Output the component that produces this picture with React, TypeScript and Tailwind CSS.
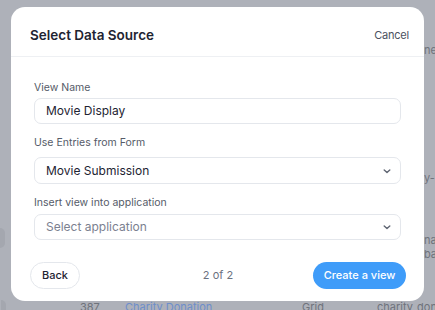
import type { FC } from "react";

const Chevron: FC = () => (
  <svg width="10" height="10" viewBox="0 0 10 10" fill="none" className="text-[#5f6572]">
    <path d="M2.2 3.9 5 6.5 7.8 3.9" stroke="currentColor" strokeWidth="1.4" strokeLinecap="round" strokeLinejoin="round" />
  </svg>
);

const App: FC = () => {
  return (
    <div className="relative h-[310px] w-[435px] overflow-hidden bg-[#aeb1b9] font-['Inter',sans-serif]">
      {/* page behind the dialog */}
      <div className="flex h-full flex-col text-[11px] text-[#6f737c]">
        <div className="flex flex-1">
          <div className="w-[6px] pt-[228px]">
            <div className="h-[20px] w-[5px] rounded-r-md bg-[#a4a7af]" />
          </div>
          <div className="flex-1" />
          <div className="w-[11px] overflow-hidden whitespace-nowrap leading-[14px]">
            <div className="mt-[43px]">ned</div>
            <div className="mt-[114px]">y-</div>
            <div className="mt-[48px]">na</div>
            <div>bar</div>
          </div>
        </div>
        <div className="grid h-[10px] grid-cols-[80px_45px_177px_75px_1fr] whitespace-nowrap leading-[14px]">
          <div className="pl-[1px]">
            <div className="h-[14px] w-[5px] rounded-r-md bg-[#a4a7af]" />
          </div>
          <div>387</div>
          <div className="text-[#6d8ecb]">Charity Donation</div>
          <div>Grid</div>
          <div className="overflow-hidden">charity_donation</div>
        </div>
      </div>

      {/* dialog */}
      <div className="absolute inset-0 px-[11px] pt-[7px]">
        <div className="flex h-[294px] flex-col rounded-[14px] bg-white">
          <div className="flex h-[50px] items-center justify-between border-b border-[#eef0f3] pl-[19px] pr-[15px] pt-[7px]">
            <h2 className="text-[13.5px] font-semibold text-[#1e2432]">Select Data Source</h2>
            <button className="text-[11px] tracking-[-0.2px] text-[#4b5160]">Cancel</button>
          </div>

          <div className="flex flex-col px-[23px] pt-[23px]">
            <label className="mb-[2px] text-[10.5px] leading-4 text-[#555b68]">View Name</label>
            <div className="flex h-[26px] items-center rounded-[7px] border border-[#e4e7ec] px-[11px] text-[12px] text-[#1e2432]">
              Movie Display
            </div>

            <label className="mb-[6px] mt-[11px] text-[10.5px] leading-4 text-[#555b68]">Use Entries from Form</label>
            <div className="flex h-[27px] items-center justify-between rounded-[7px] border border-[#e4e7ec] pl-[11px] pr-[8px] text-[12px] text-[#1e2432]">
              <span>Movie Submission</span>
              <Chevron />
            </div>

            <label className="mb-[3px] mt-[11px] text-[10.5px] leading-4 text-[#555b68]">Insert view into application</label>
            <div className="flex h-[26px] items-center justify-between rounded-[7px] border border-[#e4e7ec] pl-[11px] pr-[8px] text-[12px] text-[#7b8190]">
              <span>Select application</span>
              <Chevron />
            </div>
          </div>

          <div className="mt-[22px] grid grid-cols-3 items-center pl-[19px] pr-[18px]">
            <button className="h-[27px] w-[50px] justify-self-start rounded-full border border-[#e4e7ec] text-[11px] font-medium text-[#1e2432]">
              Back
            </button>
            <span className="justify-self-center text-[11px] text-[#6b7180]">2 of 2</span>
            <button className="h-[27px] w-[93px] justify-self-end rounded-full bg-[#3f9cf9] text-[11px] font-medium text-white">
              Create a view
            </button>
          </div>
        </div>
      </div>
    </div>
  );
};

export default App;
